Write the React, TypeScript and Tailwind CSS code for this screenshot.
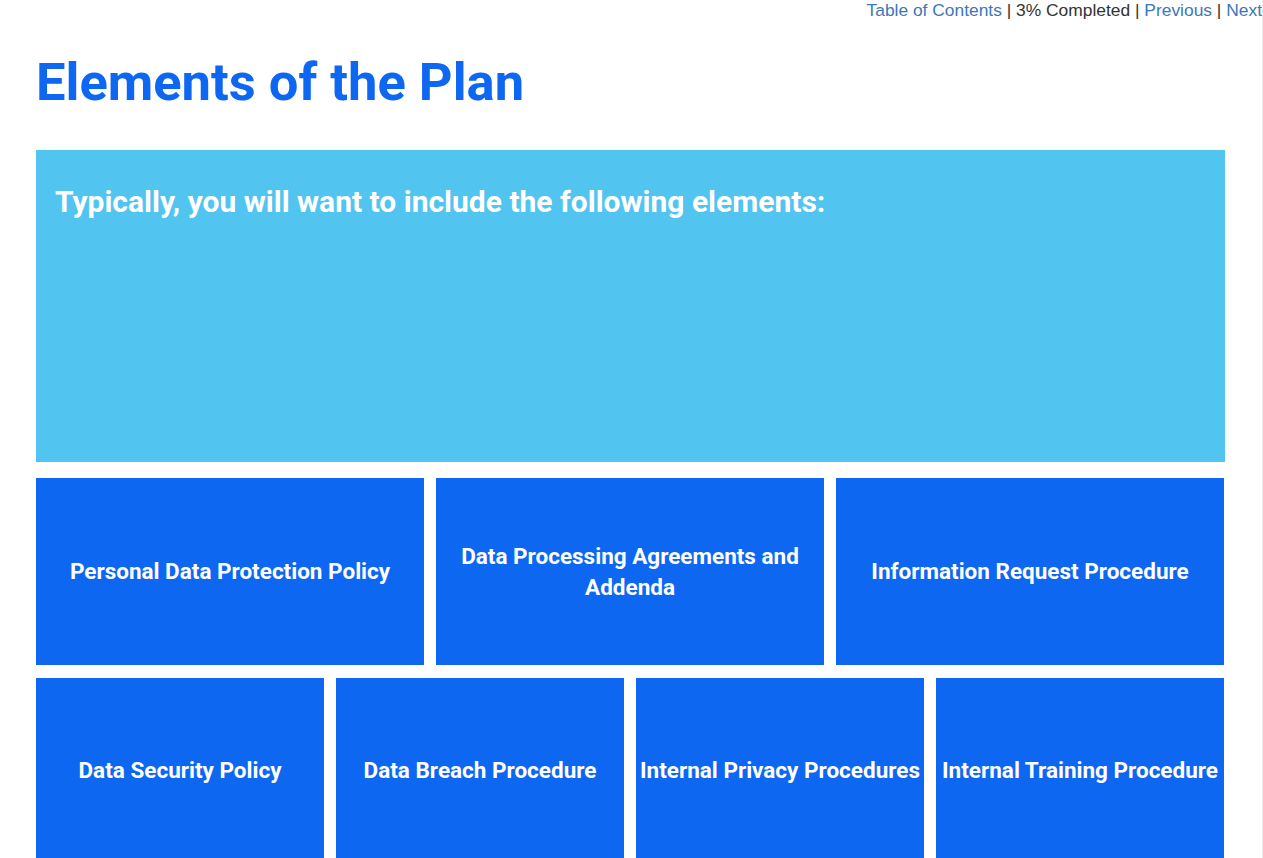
export default function App() {
  const row1 = [
    "Personal Data Protection Policy",
    "Data Processing Agreements and Addenda",
    "Information Request Procedure",
  ];
  const row2 = [
    "Data Security Policy",
    "Data Breach Procedure",
    "Internal Privacy Procedures",
    "Internal Training Procedure",
  ];

  return (
    <div className="relative h-[858px] w-[1263px] overflow-hidden bg-white">
      <div className="absolute right-0 top-0 h-full w-px bg-[#ececec]" />
      <div className="flex justify-end pr-px font-['Liberation_Sans',Arial,sans-serif] text-[17.4px] leading-[20px] text-[#333]">
        <div className="whitespace-nowrap">
          <a className="text-[#3b78b8]">Table of Contents</a> | 3% Completed |{" "}
          <a className="text-[#3b78b8]">Previous</a> |{" "}
          <a className="text-[#3b78b8]">Next</a>
        </div>
      </div>

      <div className="px-9 font-['Roboto',sans-serif]">
        <h1 className="mt-[32px] text-[52.5px] font-bold leading-[60px] text-[#0d67f0]">
          Elements of the Plan
        </h1>

        <div className="mt-[38px] h-[312px] w-[1189px] bg-[#52c4f0] px-[19px] pt-[34px]">
          <p className="text-[30px] font-bold leading-[36px] text-white">
            Typically, you will want to include the following elements:
          </p>
        </div>

        <div className="mt-4 grid w-[1188px] grid-cols-3 gap-3">
          {row1.map((t) => (
            <div
              key={t}
              className="flex h-[187px] items-center justify-center bg-[#0d67f0] px-6 text-center text-[22.5px] font-bold leading-[31px] text-white"
            >
              {t}
            </div>
          ))}
        </div>

        <div className="mt-[13px] grid w-[1188px] grid-cols-4 gap-3">
          {row2.map((t) => (
            <div
              key={t}
              className="flex h-[185px] items-center justify-center bg-[#0d67f0] text-center text-[22.5px] font-bold leading-[31px] text-white"
            >
              {t}
            </div>
          ))}
        </div>
      </div>
    </div>
  );
}
